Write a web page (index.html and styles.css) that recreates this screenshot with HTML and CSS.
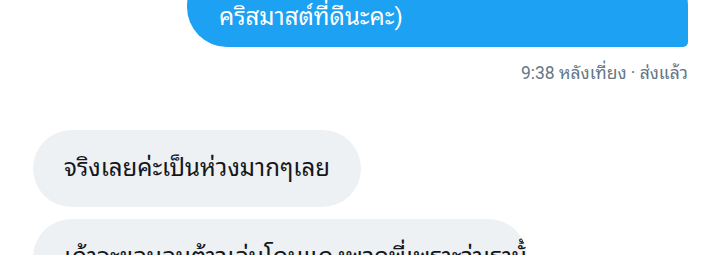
FILE: index.html
```html
<!DOCTYPE html>
<html lang="th">
<head>
    <meta charset="UTF-8">
    <title>แชท</title>
    <link rel="stylesheet" href="styles.css">
</head>
<body>
<div class="chat">
    <div class="msg sent">
        <div class="bubble">สุขสันต์วันคริสต์มาสนะคะ (ขอให้มีวัน<br>คริสมาสต์ที่ดีนะคะ)</div>
        <div class="meta">9:38 หลังเที่ยง · ส่งแล้ว</div>
    </div>
    <div class="msg received">
        <div class="bubble">จริงเลยค่ะเป็นห่วงมากๆเลย</div>
    </div>
    <div class="msg received">
        <div class="bubble">เค้าจะขอนอนต้าวเล่นโดนแดงพวกพี่เพราะว่าเรานั้น</div>
    </div>
</div>
</body>
</html>
```

FILE: styles.css
```css
*{
    margin: 0;
    padding: 0;
    box-sizing: border-box;
}
body{
    background: #fff;
    font-family: Roboto, "Noto Sans Thai Looped", "Noto Sans Thai", "Noto Sans", sans-serif;
    overflow: hidden;
}
.chat{
    display: flex;
    flex-direction: column;
    padding: 0 32px 0 33px;
}
.msg{
    display: flex;
    flex-direction: column;
}
.msg.sent{
    align-items: flex-end;
    margin-top: -34px;
}
.msg.received{
    align-items: flex-start;
    margin-top: 12px;
}
.msg.sent + .msg.received{
    margin-top: 45px;
}
.bubble{
    font-size: 24px;
    line-height: 34px;
}
.sent .bubble{
    width: 501px;
    background: #1da1f2;
    color: #fff;
    padding: 0 32px 13px 32px;
    border-radius: 40px 40px 5px 40px;
    white-space: nowrap;
}
.received .bubble{
    background: #eef1f3;
    color: #14171a;
    padding: 21px 31px 22px 31px;
    border-radius: 40px;
    white-space: nowrap;
}
.received:last-child .bubble{
    width: 494px;
    overflow: hidden;
}
.meta{
    margin-top: 10px;
    font-size: 17.5px;
    color: #657786;
}
```
